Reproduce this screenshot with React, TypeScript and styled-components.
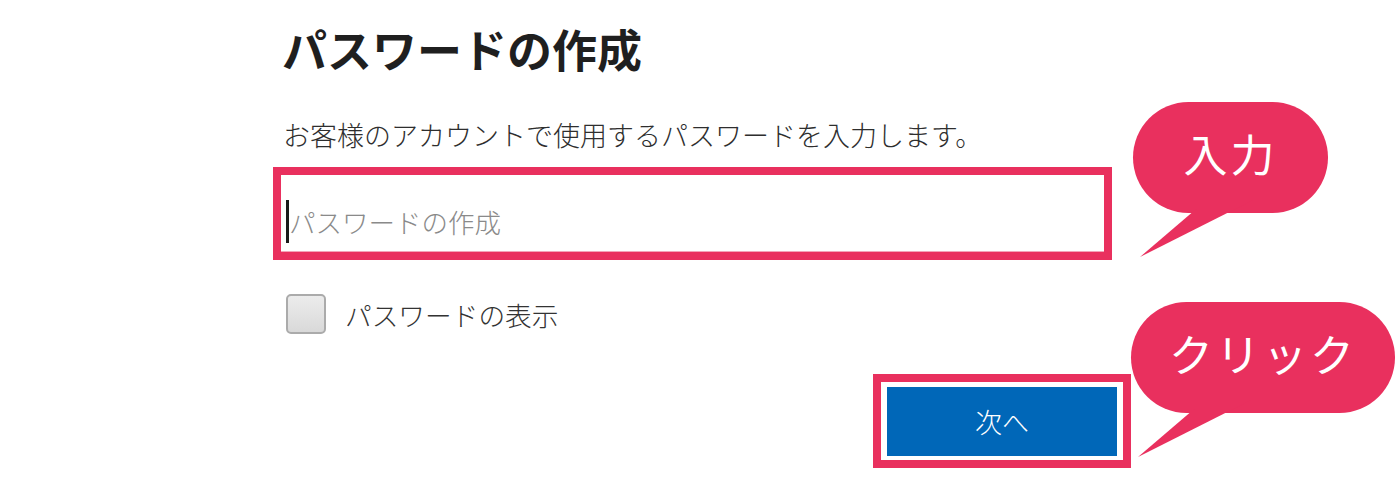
import React from "react";
import styled, { createGlobalStyle } from "styled-components";

const PINK = "#e9305e";

const GlobalStyle = createGlobalStyle`
  html, body {
    margin: 0;
    background: #ffffff;
  }
  body {
    font-family: "Noto Sans CJK JP", "Noto Sans", sans-serif;
  }
`;

const Page = styled.div`
  position: relative;
  width: 1400px;
  height: 494px;
  overflow: hidden;
  box-sizing: border-box;
  padding: 27px 0 0 273px;
  background: #fff;
`;

const Form = styled.div`
  width: 858px;
  display: flex;
  flex-direction: column;
`;

const Title = styled.h1`
  margin: 0 0 0 9px;
  font-size: 45px;
  line-height: 44px;
  font-weight: 700;
  color: #1f1f1f;
`;

const Lead = styled.p`
  margin: 50px 0 0 10px;
  font-size: 27px;
  line-height: 27px;
  font-weight: 300;
  color: #2e2e2e;
`;

const Field = styled.div`
  margin-top: 19px;
  width: 839px;
  height: 93px;
  box-sizing: border-box;
  border: 8px solid ${PINK};
  display: flex;
  align-items: center;
  padding: 16px 0 0 5px;
  background: #fff;
  box-shadow: inset 0 -1px 0 #f3a5b8;
`;

const Caret = styled.span`
  width: 3px;
  height: 43px;
  background: #1a1a1a;
`;

const Placeholder = styled.span`
  font-size: 26.5px;
  line-height: 27px;
  font-weight: 300;
  color: #8a8a8a;
`;

const CheckRow = styled.label`
  margin: 34px 0 0 13px;
  display: flex;
  align-items: center;
  gap: 19px;
  height: 40px;
`;

const Box = styled.span`
  width: 40px;
  height: 40px;
  box-sizing: border-box;
  border: 2px solid #ababab;
  border-radius: 5px;
  background: linear-gradient(#ececec, #d9d9d9);
`;

const CheckLabel = styled.span`
  font-size: 26.7px;
  line-height: 27px;
  font-weight: 300;
  color: #333;
`;

const ButtonRow = styled.div`
  margin-top: 40px;
  display: flex;
  justify-content: flex-end;
`;

const ButtonFrame = styled.div`
  border: 8px solid ${PINK};
  padding: 5px 6px 4px;
  background: #fff;
`;

const NextButton = styled.button`
  width: 230px;
  height: 69px;
  border: 0;
  padding: 0;
  background: #0067b8;
  color: #fff;
  font-family: inherit;
  font-size: 27px;
  line-height: 27px;
  font-weight: 300;
  cursor: pointer;
`;

const Bubble = styled.div<{ $left: number; $top: number; $width: number }>`
  position: absolute;
  left: ${(p) => p.$left}px;
  top: ${(p) => p.$top}px;
  width: ${(p) => p.$width}px;
  height: 111px;
  border-radius: 56px;
  background: ${PINK};
  display: flex;
  align-items: center;
  justify-content: center;
  padding-bottom: 10px;
  box-sizing: border-box;
`;

const BubbleText = styled.span`
  position: relative;
  z-index: 1;
  color: #fff;
  font-size: 44px;
  line-height: 44px;
  font-weight: 400;
  letter-spacing: 3px;
`;

const Tail = styled.svg`
  position: absolute;
  left: 0;
  top: 0;
  overflow: visible;
`;

function Callout({ left, top, width, text }: { left: number; top: number; width: number; text: string }) {
  return (
    <Bubble $left={left} $top={top} $width={width}>
      <Tail width="130" height="160" viewBox="0 0 130 160">
        <polygon points="76,96 124,96 7,155" fill={PINK} />
      </Tail>
      <BubbleText>{text}</BubbleText>
    </Bubble>
  );
}

export default function App() {
  return (
    <>
      <GlobalStyle />
      <Page>
        <Form>
          <Title>パスワードの作成</Title>
          <Lead>お客様のアカウントで使用するパスワードを入力します。</Lead>
          <Field>
            <Caret />
            <Placeholder>パスワードの作成</Placeholder>
          </Field>
          <CheckRow>
            <Box />
            <CheckLabel>パスワードの表示</CheckLabel>
          </CheckRow>
          <ButtonRow>
            <ButtonFrame>
              <NextButton>次へ</NextButton>
            </ButtonFrame>
          </ButtonRow>
        </Form>
        <Callout left={1133} top={102} width={195} text="入力" />
        <Callout left={1131} top={302} width={264} text="クリック" />
      </Page>
    </>
  );
}
